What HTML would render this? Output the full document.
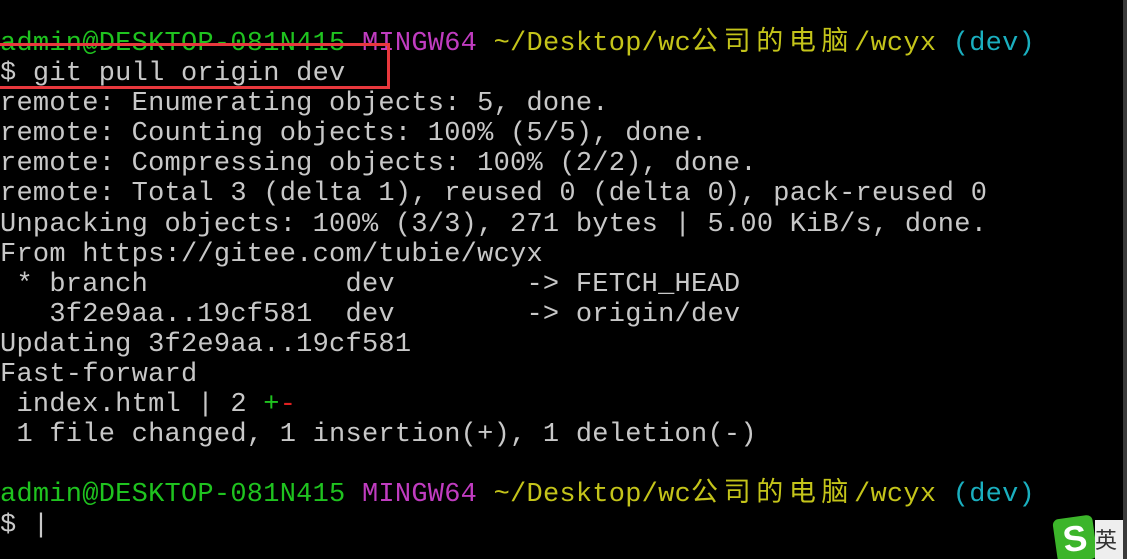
<!DOCTYPE html>
<html><head><meta charset="utf-8"><style>
html,body{margin:0;padding:0;background:#000;width:1127px;height:559px;overflow:hidden;position:relative}
pre{margin:0;position:absolute;left:0;top:29px;font-family:"Liberation Mono","Noto Sans CJK SC",monospace;font-size:27px;line-height:30.1px;color:#c8c8c8;letter-spacing:0.25px}
.g{color:#1fc31f}.m{color:#c03cc0}.y{color:#c4c41a}.c{color:#1aafbf}.r{color:#e02020}
.k{letter-spacing:5.6px}
.box{position:absolute;left:-3px;top:43px;width:387px;height:40px;border:3px solid #e8383d}
.sb{position:absolute;right:0;top:0;width:4px;height:559px;background:#3a3a3a}
.sg{position:absolute;left:1055px;top:517px;width:40px;height:44px;background:#3cb52a;border-radius:6px;transform:rotate(-8deg);color:#fff;font:bold 36px "Liberation Sans",sans-serif;text-align:center;line-height:44px}
.wp{position:absolute;left:1095px;top:520px;width:28px;height:39px;background:#eee;color:#333;font:22px "Noto Sans CJK SC",sans-serif;line-height:39px;overflow:hidden}
</style></head><body>
<pre><span class="g">admin@DESKTOP-081N415</span> <span class="m">MINGW64</span> <span class="y">~/Desktop/wc<span class="k">公司的电脑</span>/wcyx</span> <span class="c">(dev)</span>
$ git pull origin dev
remote: Enumerating objects: 5, done.
remote: Counting objects: 100% (5/5), done.
remote: Compressing objects: 100% (2/2), done.
remote: Total 3 (delta 1), reused 0 (delta 0), pack-reused 0
Unpacking objects: 100% (3/3), 271 bytes | 5.00 KiB/s, done.
From https://gitee.com/tubie/wcyx
 * branch            dev        -&gt; FETCH_HEAD
   3f2e9aa..19cf581  dev        -&gt; origin/dev
Updating 3f2e9aa..19cf581
Fast-forward
 index.html | 2 <span class="g">+</span><span class="r">-</span>
 1 file changed, 1 insertion(+), 1 deletion(-)

<span class="g">admin@DESKTOP-081N415</span> <span class="m">MINGW64</span> <span class="y">~/Desktop/wc<span class="k">公司的电脑</span>/wcyx</span> <span class="c">(dev)</span>
$ |</pre>
<div class="box"></div>
<div class="sb"></div>
<div class="sg">S</div>
<div class="wp">英</div>
</body></html>
